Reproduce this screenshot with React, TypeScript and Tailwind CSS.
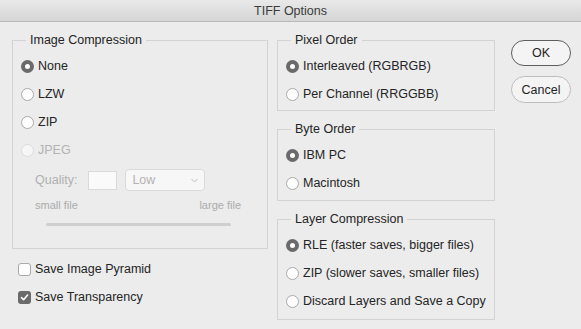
import React from "react";

const font = { fontFamily: '"Liberation Sans", Arial, sans-serif' };

function Radio({ checked = false, disabled = false }: { checked?: boolean; disabled?: boolean }) {
  if (checked) {
    return (
      <span className="flex h-[13px] w-[13px] shrink-0 items-center justify-center rounded-full bg-[#6a6a6a]">
        <span className="h-[5px] w-[5px] rounded-full bg-white" />
      </span>
    );
  }
  return (
    <span
      className={
        disabled
          ? "h-[13px] w-[13px] shrink-0 rounded-full border border-[#dcdcdc] bg-[#f6f6f6]"
          : "h-[13px] w-[13px] shrink-0 rounded-full border border-[#a9a9a9] bg-white"
      }
    />
  );
}

function RadioRow({ label, checked = false, disabled = false }: { label: string; checked?: boolean; disabled?: boolean }) {
  return (
    <div className="flex h-[28px] items-center gap-[4px]">
      <Radio checked={checked} disabled={disabled} />
      <span className={disabled ? "text-[#b3b3b3]" : "text-[#242424]"}>{label}</span>
    </div>
  );
}

function Group({ title, children, className = "" }: { title: string; children: React.ReactNode; className?: string }) {
  return (
    <fieldset className={"border border-[#d3d3d3] " + className}>
      <legend className="ml-[13px] px-[4px] text-[12.5px] leading-[16px] text-[#242424]">{title}</legend>
      {children}
    </fieldset>
  );
}

function Checkbox({ label, checked = false }: { label: string; checked?: boolean }) {
  return (
    <div className="flex h-[28px] items-center gap-[4px] pl-[6px]">
      {checked ? (
        <span className="flex h-[13px] w-[13px] items-center justify-center rounded-[3px] bg-[#6a6a6a]">
          <svg width="9" height="9" viewBox="0 0 9 9">
            <path d="M1.5 4.6 L3.6 6.7 L7.6 2" fill="none" stroke="white" strokeWidth="1.6" strokeLinecap="round" strokeLinejoin="round" />
          </svg>
        </span>
      ) : (
        <span className="h-[13px] w-[13px] rounded-[3px] border border-[#a9a9a9] bg-white" />
      )}
      <span className="text-[#242424]">{label}</span>
    </div>
  );
}

export default function App() {
  return (
    <div className="h-[329px] w-[581px] overflow-hidden bg-[#ececec] text-[12.5px] leading-[16px]" style={font}>
      <div className="flex h-[22px] items-center justify-center border-b border-[#b8b8b8] bg-gradient-to-b from-[#e9e9e9] to-[#d5d5d5] text-[12.5px] text-[#3a3a3a]">
        TIFF Options
      </div>
      <div className="flex pl-[12px] pt-[10px]">
        <div className="flex w-[256px] flex-col">
          <Group title="Image Compression" className="w-[256px]">
            <div className="flex flex-col pl-[8px] pt-[4px]">
              <RadioRow label="None" checked />
              <RadioRow label="LZW" />
              <RadioRow label="ZIP" />
              <RadioRow label="JPEG" disabled />
            </div>
            <div className="mt-[3px] flex h-[26px] items-center pl-[22px] text-[#b0b0b0]">
              <span>Quality:</span>
              <span className="ml-[11px] h-[19px] w-[29px] border border-[#dadada] bg-[#fafafa]" />
              <span className="ml-[8px] flex h-[22px] w-[80px] items-center justify-between rounded-[4px] border border-[#dadada] bg-[#f7f7f7] pl-[6px] pr-[6px] text-[#b3b3b3]">
                <span>Low</span>
                <svg width="7" height="5" viewBox="0 0 7 5">
                  <path d="M0.5 1 L3.5 4 L6.5 1" fill="none" stroke="#bdbdbd" strokeWidth="1" />
                </svg>
              </span>
            </div>
            <div className="mt-[5px] flex justify-between pl-[22px] pr-[26px] text-[11px] leading-[14px] text-[#ababab]">
              <span>small file</span>
              <span>large file</span>
            </div>
            <div className="mb-[22px] ml-[33px] mt-[11px] h-[3px] w-[185px] rounded-full bg-[#cfcfcf]" />
          </Group>
          <div className="mt-[6px] flex flex-col">
            <Checkbox label="Save Image Pyramid" />
            <Checkbox label="Save Transparency" checked />
          </div>
        </div>
        <div className="ml-[9px] flex w-[218px] flex-col gap-[10px]">
          <Group title="Pixel Order">
            <div className="flex flex-col pb-[2px] pl-[8px] pt-[4px]">
              <RadioRow label="Interleaved (RGBRGB)" checked />
              <RadioRow label="Per Channel (RRGGBB)" />
            </div>
          </Group>
          <Group title="Byte Order">
            <div className="flex flex-col pb-[3px] pl-[8px] pt-[4px]">
              <RadioRow label="IBM PC" checked />
              <RadioRow label="Macintosh" />
            </div>
          </Group>
          <Group title="Layer Compression">
            <div className="flex flex-col pb-[4px] pl-[8px] pt-[4px]">
              <RadioRow label="RLE (faster saves, bigger files)" checked />
              <RadioRow label="ZIP (slower saves, smaller files)" />
              <RadioRow label="Discard Layers and Save a Copy" />
            </div>
          </Group>
        </div>
        <div className="ml-[16px] mt-[8px] flex flex-col gap-[10px]">
          <button className="flex h-[26px] w-[60px] items-center justify-center rounded-full border border-[#5e5e5e] bg-[#f4f4f4] text-[12.5px] text-[#242424]">
            OK
          </button>
          <button className="flex h-[27px] w-[60px] items-center justify-center rounded-full border border-[#bdbdbd] bg-[#f4f4f4] text-[12.5px] text-[#242424]">
            Cancel
          </button>
        </div>
      </div>
    </div>
  );
}
